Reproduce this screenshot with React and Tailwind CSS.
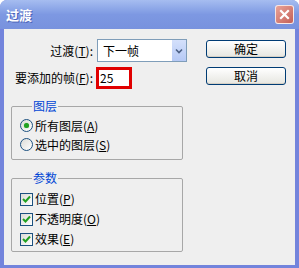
import React from 'react';

const Key = ({ children }) => <span className="underline underline-offset-[1px]">{children}</span>;

const Radio = ({ checked }) => (
  <span className="w-[13px] h-[13px] rounded-full border border-[#1c5180] bg-gradient-to-br from-[#dcdcd7] to-white flex items-center justify-center shrink-0">
    {checked && <span className="w-[5px] h-[5px] rounded-full bg-[#21a121] shadow-[0_0_1px_#55c255]" />}
  </span>
);

const Check = () => (
  <span className="w-[13px] h-[13px] border border-[#1c5180] bg-gradient-to-br from-[#dcdcd7] to-white flex items-center justify-center shrink-0">
    <svg width="9" height="9" viewBox="0 0 9 9">
      <path d="M1 4 L3.5 6.5 L8 1.5" fill="none" stroke="#21a121" strokeWidth="2" />
    </svg>
  </span>
);

const XpButton = ({ children }) => (
  <button className="w-[80px] h-[18px] rounded-[3px] border border-[#003c74] bg-gradient-to-b from-white to-[#e6e6e0] shadow-[inset_0_-1px_0_#d6d0c5] text-[12px] leading-[16px] text-black">
    {children}
  </button>
);

const Group = ({ title, className, children }) => (
  <fieldset className={`w-[172px] ml-[7px] border border-[#a7a7a7] rounded-[2px] pl-[8px] ${className}`}>
    <legend className="ml-[12px] px-[1px] text-[12px] leading-[14px] text-[#0046d5]">{title}</legend>
    {children}
  </fieldset>
);

export default function App() {
  return (
    <div className="w-[299px] h-[268px] flex flex-col bg-[#7384dc] rounded-t-[7px] overflow-hidden font-['Noto_Sans_CJK_SC',sans-serif] text-black select-none">
      {/* title bar */}
      <div className="h-[29px] shrink-0 flex items-center justify-between pl-[6px] pr-[5px] bg-gradient-to-b from-[#a6bdf0] via-[#7d98e2] to-[#7892de]">
        <span className="text-[13px] font-bold text-white [text-shadow:1px_1px_0_#4a62b8]">过渡</span>
        <div className="w-[19px] h-[19px] rounded-[3px] border border-white/80 bg-gradient-to-br from-[#e9a398] to-[#c35f58] flex items-center justify-center">
          <svg width="11" height="11" viewBox="0 0 11 11">
            <path d="M2 2 L9 9 M9 2 L2 9" stroke="white" strokeWidth="2.2" strokeLinecap="square" />
          </svg>
        </div>
      </div>

      {/* body */}
      <div className="flex-1 mx-[4px] mb-[3px] bg-[#efefef] flex text-[12px]">
        <div className="w-[198px] pt-[10px] flex flex-col">
          <div className="flex items-center h-[23px]">
            <span className="w-[89px] text-right">过渡(<Key>T</Key>):</span>
            <div className="ml-[4px] w-[90px] h-[23px] border border-[#7f9db9] bg-white flex items-center justify-between">
              <span className="pl-[5px]">下一帧</span>
              <span className="w-[14px] h-[21px] bg-gradient-to-b from-[#d4e0fb] to-[#b6c9f5] flex items-center justify-center">
                <svg width="8" height="6" viewBox="0 0 8 6">
                  <path d="M1 1.5 L4 4.5 L7 1.5" fill="none" stroke="#4d6185" strokeWidth="1.6" />
                </svg>
              </span>
            </div>
          </div>
          <div className="flex items-center h-[22px] mt-[5px]">
            <span className="w-[89px] text-right">要添加的帧(<Key>F</Key>):</span>
            <div className="ml-[3px] w-[36px] h-[22px] border-[3px] border-[#e00000] bg-white flex items-center pl-[1px]">
              25
            </div>
          </div>

          <Group title="图层" className="mt-[10px] pt-[3px] pb-[5px]">
            <div className="flex items-center h-[19px] gap-[2px]">
              <Radio checked />
              <span>所有图层(<Key>A</Key>)</span>
            </div>
            <div className="flex items-center h-[19px] gap-[2px]">
              <Radio />
              <span>选中的图层(<Key>S</Key>)</span>
            </div>
          </Group>

          <Group title="参数" className="mt-[11px] pt-[4px] pb-[2px]">
            <div className="flex items-center h-[20px] gap-[2px]">
              <Check />
              <span>位置(<Key>P</Key>)</span>
            </div>
            <div className="flex items-center h-[20px] gap-[2px]">
              <Check />
              <span>不透明度(<Key>O</Key>)</span>
            </div>
            <div className="flex items-center h-[20px] gap-[2px]">
              <Check />
              <span>效果(<Key>E</Key>)</span>
            </div>
          </Group>
        </div>

        <div className="pl-[4px] pt-[11px] flex flex-col gap-[9px]">
          <XpButton>确定</XpButton>
          <XpButton>取消</XpButton>
        </div>
      </div>
    </div>
  );
}
